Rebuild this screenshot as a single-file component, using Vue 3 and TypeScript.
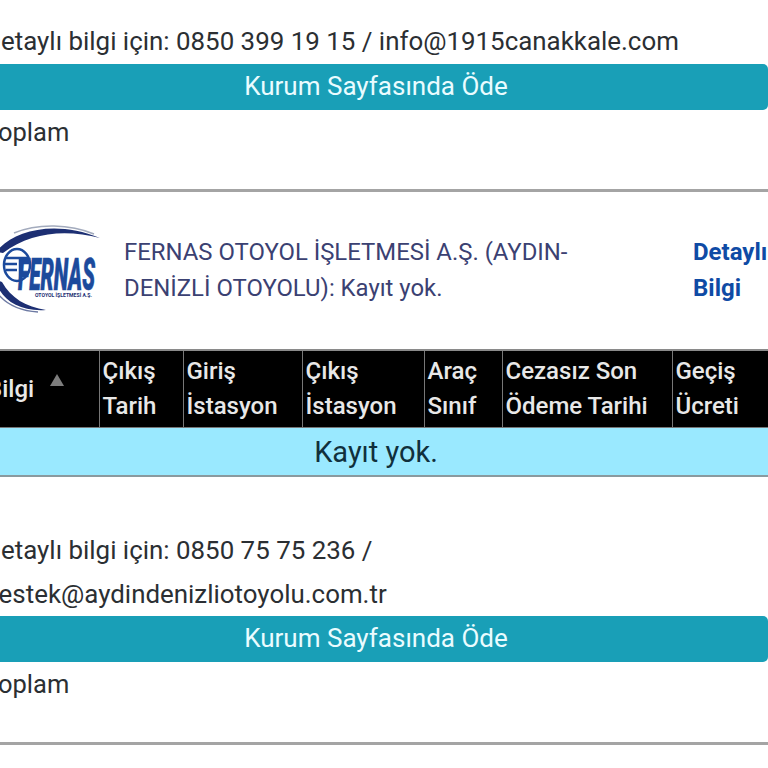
<script setup lang="ts">
interface Col { first: string; second?: string; width: number }
const cols: Col[] = [
  { first: 'Bilgi', width: 115 },
  { first: 'Çıkış', second: 'Tarih', width: 84 },
  { first: 'Giriş', second: 'İstasyon', width: 119 },
  { first: 'Çıkış', second: 'İstasyon', width: 122 },
  { first: 'Araç', second: 'Sınıf', width: 78 },
  { first: 'Cezasız Son', second: 'Ödeme Tarihi', width: 170 },
  { first: 'Geçiş', second: 'Ücreti', width: 96 },
]
</script>

<template>
  <div class="page">
    <section class="block first">
      <p class="info">Detaylı bilgi için: 0850 399 19 15 / info@1915canakkale.com</p>
      <a class="pay">Kurum Sayfasında Öde</a>
      <p class="total">Toplam</p>
    </section>
    <hr class="rule" />
    <section class="org">
      <svg class="logo" viewBox="0 0 116 96" aria-hidden="true">
        <path d="M12 30C28 9 70 -3 116 16C82 7 46 10 19 31Z" fill="#1d2f73" />
        <path d="M30 11C54 1 86 2 110 12" fill="none" stroke="#a3abbd" stroke-width="1.5" />
        <path d="M12 58C15 76 34 90 62 88C42 85 27 76 18 60Z" fill="#1d2f73" />
        <path d="M14 72C24 84 38 89 54 90" fill="none" stroke="#6d7aa3" stroke-width="1.5" />
        <ellipse cx="33" cy="43" rx="13" ry="16" fill="#fff" stroke="#1c4a9c" stroke-width="2.5" />
        <path d="M22 36H44M21 42H33M22 48H33M36 36V60" fill="none" stroke="#1c4a9c" stroke-width="2.5" />
        <text class="logo-word" x="34" y="68" textLength="77" lengthAdjust="spacingAndGlyphs">FERNAS</text>
        <text class="logo-sub" x="51" y="75" textLength="57" lengthAdjust="spacingAndGlyphs">OTOYOL İŞLETMESİ A.Ş.</text>
      </svg>
      <p class="org-name">FERNAS OTOYOL İŞLETMESİ A.Ş. (AYDIN-DENİZLİ OTOYOLU): Kayıt yok.</p>
      <a class="more">Detaylı Bilgi</a>
    </section>
    <table class="grid">
      <colgroup>
        <col v-for="(c, i) in cols" :key="i" :style="{ width: c.width + 'px' }" />
      </colgroup>
      <thead>
        <tr>
          <th v-for="(c, i) in cols" :key="i" :class="{ sorted: i === 0 }">
            <template v-if="c.second">{{ c.first }}<br />{{ c.second }}</template>
            <template v-else>{{ c.first }}<span class="arrow"></span></template>
          </th>
        </tr>
      </thead>
      <tbody>
        <tr>
          <td :colspan="cols.length">Kayıt yok.</td>
        </tr>
      </tbody>
    </table>
    <section class="block second">
      <p class="info two">Detaylı bilgi için: 0850 75 75 236 /<br />destek@aydindenizliotoyolu.com.tr</p>
      <a class="pay">Kurum Sayfasında Öde</a>
      <p class="total">Toplam</p>
    </section>
    <hr class="rule" />
  </div>
</template>

<style scoped>
.page {
  width: 784px;
  margin-left: -16px;
  font-family: Roboto, "Liberation Sans", sans-serif;
  color: #2b2f33;
}
.block {
  display: flex;
  flex-direction: column;
}
.first {
  padding-top: 19px;
}
.second {
  padding-top: 51px;
}
.info {
  margin: 0 0 1px;
  font-size: 25.9px;
  line-height: 44px;
}
.two {
  margin: 0;
}
.pay {
  display: block;
  height: 46px;
  line-height: 45px;
  border-radius: 5px;
  background: #199fb7;
  color: #eafcff;
  font-size: 26px;
  text-align: center;
}
.total {
  margin: 0;
  height: 79px;
  font-size: 25.5px;
  line-height: 44px;
}
.second .total {
  height: 80px;
}
.rule {
  margin: 0;
  height: 3px;
  border: 0;
  background: #a4a4a4;
}
.org {
  display: flex;
  align-items: center;
  height: 157px;
}
.logo {
  flex: none;
  width: 116px;
  height: 96px;
  margin-top: -2px;
}
.logo-word {
  font-size: 44px;
  font-weight: 900;
  font-style: italic;
  fill: #1c4a9c;
  stroke: #1c4a9c;
  stroke-width: 0.6px;
  font-family: Roboto, sans-serif;
}
.logo-sub {
  font-size: 6px;
  font-weight: 700;
  fill: #1d2f73;
  font-family: Roboto, sans-serif;
}
.org-name {
  flex: none;
  width: 450px;
  margin: 0 0 2px 24px;
  color: #3b4172;
  font-size: 23.9px;
  line-height: 36px;
}
.more {
  flex: none;
  width: 90px;
  margin: 0 0 2px 119px;
  color: #0f4ba5;
  font-size: 24px;
  font-weight: 700;
  line-height: 36px;
}
.grid {
  width: 784px;
  border-collapse: collapse;
  table-layout: fixed;
  border-top: 2px solid #8a8a8a;
  border-bottom: 2px solid #8a9a9f;
}
th {
  height: 76px;
  padding: 0 2px 0 3px;
  background: #000;
  border-right: 1px solid #777;
  border-bottom: 1px solid #777;
  color: #e8e8e8;
  font-size: 24px;
  font-weight: 500;
  line-height: 35px;
  text-align: left;
}
th:last-child {
  border-right: 0;
}
.arrow {
  position: absolute;
  margin: 2px 0 0 16px;
  border-left: 7px solid transparent;
  border-right: 7px solid transparent;
  border-bottom: 12px solid #7d7d7d;
}
td {
  height: 47px;
  padding: 0;
  background: #9ae9ff;
  color: #10303c;
  font-size: 29px;
  text-align: center;
}
</style>

<style>
html, body {
  overflow: hidden;
  background: #fff;
}
</style>
